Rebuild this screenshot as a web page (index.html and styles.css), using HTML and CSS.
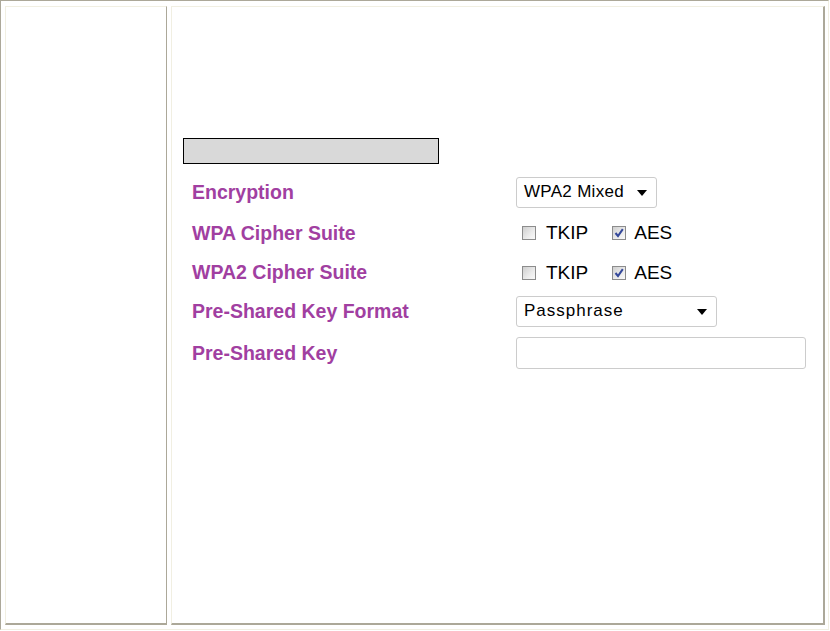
FILE: index.html
```html
<!DOCTYPE html>
<html>
<head>
<meta charset="utf-8">
<link rel="stylesheet" href="styles.css">
</head>
<body>
<div class="outer">
  <div class="frame left-frame"></div>
  <div class="frame main-frame">
    <div class="bar"></div>
    <div class="form">
      <div class="row r1">
        <div class="label">Encryption</div>
        <div class="ctl">
          <div class="select sel-enc"><span class="sel-text">WPA2 Mixed</span><span class="arrow"></span></div>
        </div>
      </div>
      <div class="row r2">
        <div class="label">WPA Cipher Suite</div>
        <div class="ctl checks">
          <span class="cb"></span><span class="cb-text first">TKIP</span>
          <span class="cb checked"><svg viewBox="0 0 12 12" width="12" height="12"><path d="M2.5 6 L5 9 L9.8 2.2" fill="none" stroke="#34489a" stroke-width="2"/></svg></span><span class="cb-text second">AES</span>
        </div>
      </div>
      <div class="row r3">
        <div class="label">WPA2 Cipher Suite</div>
        <div class="ctl checks">
          <span class="cb"></span><span class="cb-text first">TKIP</span>
          <span class="cb checked"><svg viewBox="0 0 12 12" width="12" height="12"><path d="M2.5 6 L5 9 L9.8 2.2" fill="none" stroke="#34489a" stroke-width="2"/></svg></span><span class="cb-text second">AES</span>
        </div>
      </div>
      <div class="row r4">
        <div class="label">Pre-Shared Key Format</div>
        <div class="ctl">
          <div class="select sel-fmt"><span class="sel-text wide">Passphrase</span><span class="arrow"></span></div>
        </div>
      </div>
      <div class="row r5">
        <div class="label">Pre-Shared Key</div>
        <div class="ctl">
          <div class="input"></div>
        </div>
      </div>
    </div>
  </div>
</div>
</body>
</html>
```
FILE: styles.css
```css
html, body {
  margin: 0;
  padding: 0;
  background: #ffffff;
}
body {
  width: 830px;
  height: 631px;
  font-family: "Liberation Sans", Arial, sans-serif;
}
.outer {
  box-sizing: border-box;
  width: 829px;
  height: 630px;
  border-top: 1px solid #aca899;
  border-left: 1px solid #aca899;
  border-right: 1px solid #f1efe2;
  border-bottom: 1px solid #f1efe2;
  padding: 5px 3px 4px 4px;
  display: flex;
  gap: 4px;
}
.frame {
  box-sizing: border-box;
  height: 619px;
  background: #ffffff;
  border-top: 1px solid #f1efe2;
  border-left: 1px solid #f1efe2;
  border-bottom: 2px solid #aca899;
}
.left-frame {
  width: 162px;
  border-right: 1px solid #aca899;
}
.main-frame {
  width: 654px;
  border-right: 2px solid #aca899;
  padding: 131px 0 0 11px;
}
.bar {
  box-sizing: border-box;
  width: 256px;
  height: 26px;
  border: 1px solid #000000;
  background: #d9d9d9;
}
.form {
  margin-top: 8px;
  display: flex;
  flex-direction: column;
}
.row {
  display: flex;
  align-items: center;
}
.r1 { height: 40px; }
.r2 { height: 42px; }
.r3 { height: 37px; }
.r4 { height: 40px; }
.r5 { height: 44px; }
.label {
  width: 324px;
  padding-left: 9px;
  font-weight: bold;
  font-size: 19.5px;
  color: #a13fa1;
}
.ctl {
  display: flex;
  align-items: center;
}
.select {
  box-sizing: border-box;
  height: 31px;
  border: 1px solid #cccccc;
  border-radius: 3px;
  background: #ffffff;
  display: flex;
  align-items: center;
  justify-content: space-between;
  padding: 0 9px 0 7px;
  font-size: 17px;
  color: #000000;
}
.sel-enc { width: 141px; }
.sel-fmt { width: 201px; }
.sel-text { letter-spacing: 0.3px; }
.sel-text.wide { letter-spacing: 1px; }
.arrow {
  width: 0;
  height: 0;
  border-left: 5px solid transparent;
  border-right: 5px solid transparent;
  border-top: 6px solid #000000;
  margin-top: 1px;
}
.checks {
  padding-left: 6px;
}
.cb {
  box-sizing: border-box;
  width: 14px;
  height: 14px;
  border: 1px solid #8c8c8c;
  background: linear-gradient(135deg, #cfcfcf 0%, #ececec 60%, #fafafa 100%);
  display: inline-flex;
  align-items: center;
  justify-content: center;
}
.cb svg {
  display: block;
}
.cb-text {
  font-size: 19px;
  color: #000000;
}
.cb-text.first {
  margin-left: 10px;
  margin-right: 24px;
}
.cb-text.second {
  margin-left: 8px;
}
.input {
  box-sizing: border-box;
  width: 290px;
  height: 32px;
  border: 1px solid #cccccc;
  border-radius: 3px;
  background: #ffffff;
}
```
